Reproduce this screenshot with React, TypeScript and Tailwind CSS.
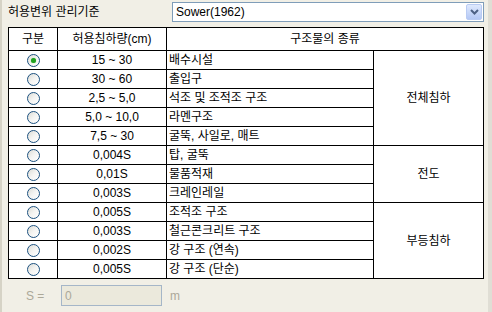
import * as React from 'react';

type Row = { radio: boolean; amount: string; kind: string };

const rows: Row[] = [
  { radio: true, amount: '15 ~ 30', kind: '배수시설' },
  { radio: false, amount: '30 ~ 60', kind: '출입구' },
  { radio: false, amount: '2,5 ~ 5,0', kind: '석조 및 조적조 구조' },
  { radio: false, amount: '5,0 ~ 10,0', kind: '라멘구조' },
  { radio: false, amount: '7,5 ~ 30', kind: '굴뚝, 사일로, 매트' },
  { radio: false, amount: '0,004S', kind: '탑, 굴뚝' },
  { radio: false, amount: '0,01S', kind: '물품적재' },
  { radio: false, amount: '0,003S', kind: '크레인레일' },
  { radio: false, amount: '0,005S', kind: '조적조 구조' },
  { radio: false, amount: '0,003S', kind: '철근콘크리트 구조' },
  { radio: false, amount: '0,002S', kind: '강 구조 (연속)' },
  { radio: false, amount: '0,005S', kind: '강 구조 (단순)' },
];

// merged last column: start row -> [rowSpan, label]
const groups: Record<number, [number, string]> = {
  0: [5, '전체침하'],
  5: [3, '전도'],
  8: [4, '부등침하'],
};

function Radio({ checked }: { checked: boolean }) {
  return (
    <span className="inline-flex w-[13px] h-[13px] rounded-full border border-[#1c5180] bg-gradient-to-br from-[#dcdcd6] via-[#f4f4f2] to-white items-center justify-center align-middle">
      {checked && <span className="w-[5px] h-[5px] rounded-full bg-[#21a121] shadow-[0_0_1px_#5fd35f]" />}
    </span>
  );
}

export default function App() {
  const [sel, setSel] = React.useState(0);
  const font = { fontFamily: '"Liberation Sans", "Noto Sans CJK KR", sans-serif' };

  return (
    <div
      className="w-[492px] h-[312px] bg-[#f1efe6] border-l-2 border-l-[#d6d3c6] border-r-4 border-r-[#e0ded5] text-[12px] text-black overflow-hidden"
      style={font}
    >
      <div className="flex items-center h-[23px] pt-[1px]">
        <span className="ml-[6px] w-[164px] leading-none">허용변위 관리기준</span>
        <div className="flex items-center w-[312px] h-[20px] border border-[#7f9db9] bg-white">
          <span className="flex-1 pl-[3px] leading-none">Sower(1962)</span>
          <span className="w-[16px] h-[16px] mr-[1px] rounded-[2px] bg-gradient-to-b from-[#dfe9fd] to-[#b4c8f5] border border-[#b9cbf3] flex items-center justify-center">
            <svg width="9" height="6" viewBox="0 0 9 6">
              <path d="M1 1 L4.5 4.5 L8 1" fill="none" stroke="#4d6185" strokeWidth="2" />
            </svg>
          </span>
        </div>
      </div>

      <table className="ml-[6px] mt-[4px] w-[475px] table-fixed border-collapse bg-white">
        <colgroup>
          <col className="w-[49px]" />
          <col className="w-[109px]" />
          <col className="w-[207px]" />
          <col className="w-[110px]" />
        </colgroup>
        <thead>
          <tr className="h-[23px]">
            <th className="border border-black font-normal text-center p-0">구분</th>
            <th className="border border-black font-normal text-center p-0">허용침하량(cm)</th>
            <th colSpan={2} className="border border-black font-normal text-center p-0">
              구조물의 종류
            </th>
          </tr>
        </thead>
        <tbody>
          {rows.map((r, i) => (
            <tr key={i} className="h-[19px]">
              <td className="border border-black p-0 text-center leading-none" onClick={() => setSel(i)}>
                <Radio checked={sel === i} />
              </td>
              <td className="border border-black p-0 text-center leading-none">{r.amount}</td>
              <td className="border border-black p-0 pl-[2px] leading-none">{r.kind}</td>
              {groups[i] && (
                <td rowSpan={groups[i][0]} className="border border-black p-0 text-center">
                  {groups[i][1]}
                </td>
              )}
            </tr>
          ))}
        </tbody>
      </table>

      <div className="flex items-center mt-[6px] h-[21px] text-[#aca899]">
        <span className="ml-[24px] w-[35px]">S =</span>
        <div className="w-[101px] h-[21px] border border-[#a5b6c8] bg-[#ebe9dc] pl-[3px] flex items-center">0</div>
        <span className="ml-[8px]">m</span>
      </div>
    </div>
  );
}
